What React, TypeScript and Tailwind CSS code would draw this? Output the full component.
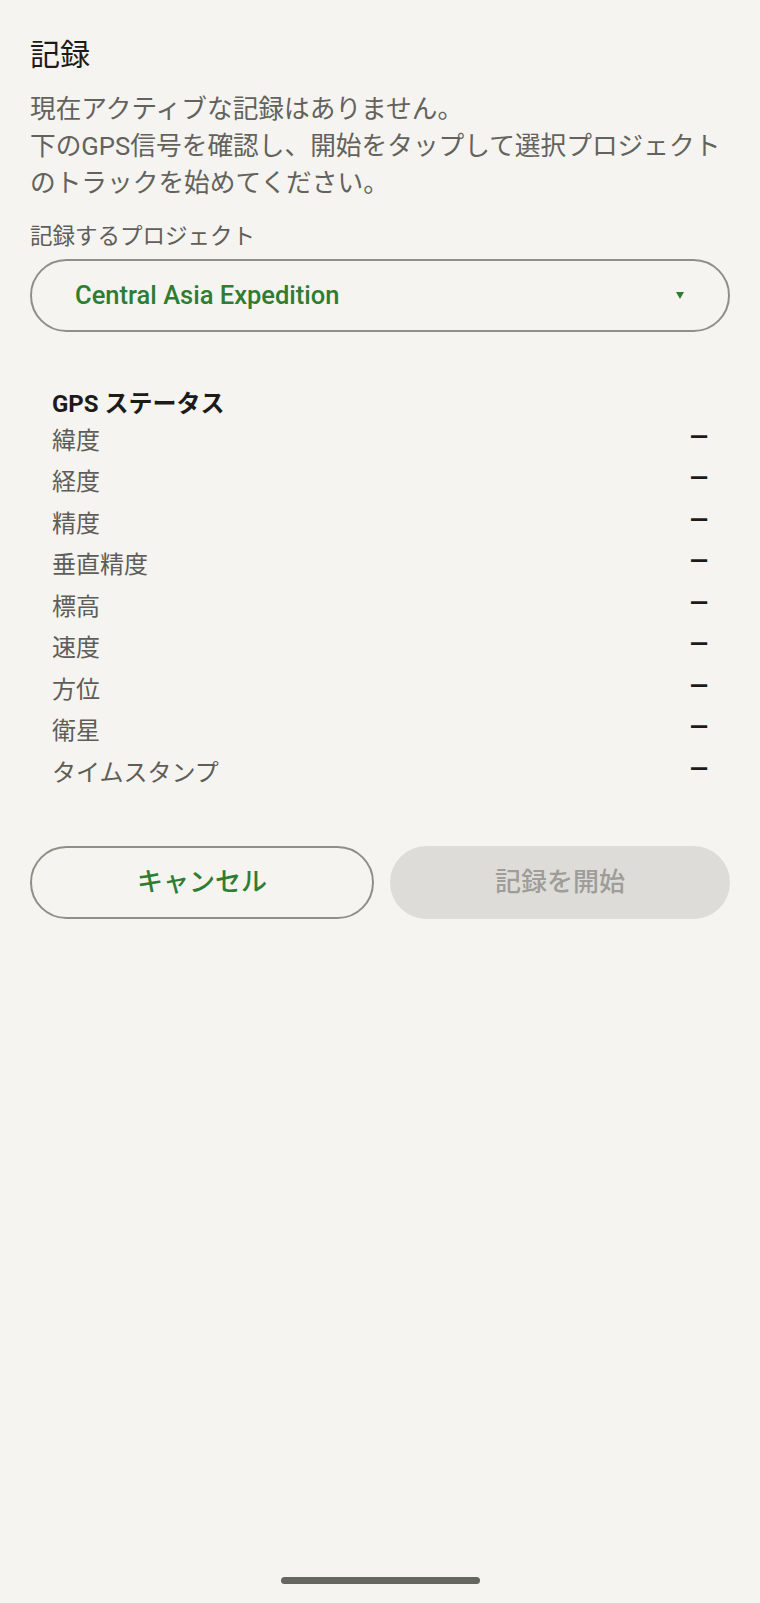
import React from 'react';

const FONT = { fontFamily: 'Roboto, "Noto Sans CJK JP", sans-serif' };

const GPS_ROWS = ['緯度', '経度', '精度', '垂直精度', '標高', '速度', '方位', '衛星', 'タイムスタンプ'];

const App: React.FC = () => {
  return (
    <div className="min-h-[1603px] bg-[#f5f4f0] flex flex-col" style={FONT}>
      <div className="px-[30px]">
        <h1 className="mt-[35px] h-[40px] text-[30px] leading-[40px] font-normal text-[#1c1b1a]">記録</h1>

        <p className="mt-[16px] text-[25.7px] leading-[37px] text-[#63625d]">
          現在アクティブな記録はありません。
          <br />
          下のGPS信号を確認し、開始をタップして選択プロジェクトのトラックを始めてください。
        </p>

        <div className="mt-[19px] text-[22.5px] leading-[30px] text-[#5f5e59]">記録するプロジェクト</div>

        <button className="mt-[8px] w-full h-[73px] rounded-full border-2 border-[#908f87] flex items-center justify-between pl-[43px] pr-[44px]">
          <span className="text-[25.5px] font-medium text-[#2e7d32]">Central Asia Expedition</span>
          <svg width="8" height="7" viewBox="0 0 8 7" className="text-[#2e7d32]">
            <path d="M0 0 H8 L4 7 Z" fill="currentColor" />
          </svg>
        </button>

        <div className="mt-[55px] px-[22px]">
          <div className="h-[33px] flex items-center text-[24px] font-bold text-[#1c1b1a]">GPS ステータス</div>
          {GPS_ROWS.map((label) => (
            <div key={label} className="h-[41.5px] flex items-center justify-between">
              <span className="text-[24px] text-[#5e5d58]">{label}</span>
              <span className="text-[24px] font-bold text-[#1c1b1a] -translate-y-[4px]">—</span>
            </div>
          ))}
        </div>

        <div className="mt-[52px] flex gap-[16px]">
          <button className="flex-1 h-[73px] rounded-full border-2 border-[#908f87] text-[26px] font-medium text-[#2e7d32]">
            キャンセル
          </button>
          <button disabled className="flex-1 h-[73px] rounded-full bg-[#dddcd8] text-[26px] font-medium text-[#9e9d98]">
            記録を開始
          </button>
        </div>
      </div>

      <div className="mt-auto mb-[19px] mx-auto w-[199px] h-[7px] rounded-full bg-[#666661]" />
    </div>
  );
};

export default App;
